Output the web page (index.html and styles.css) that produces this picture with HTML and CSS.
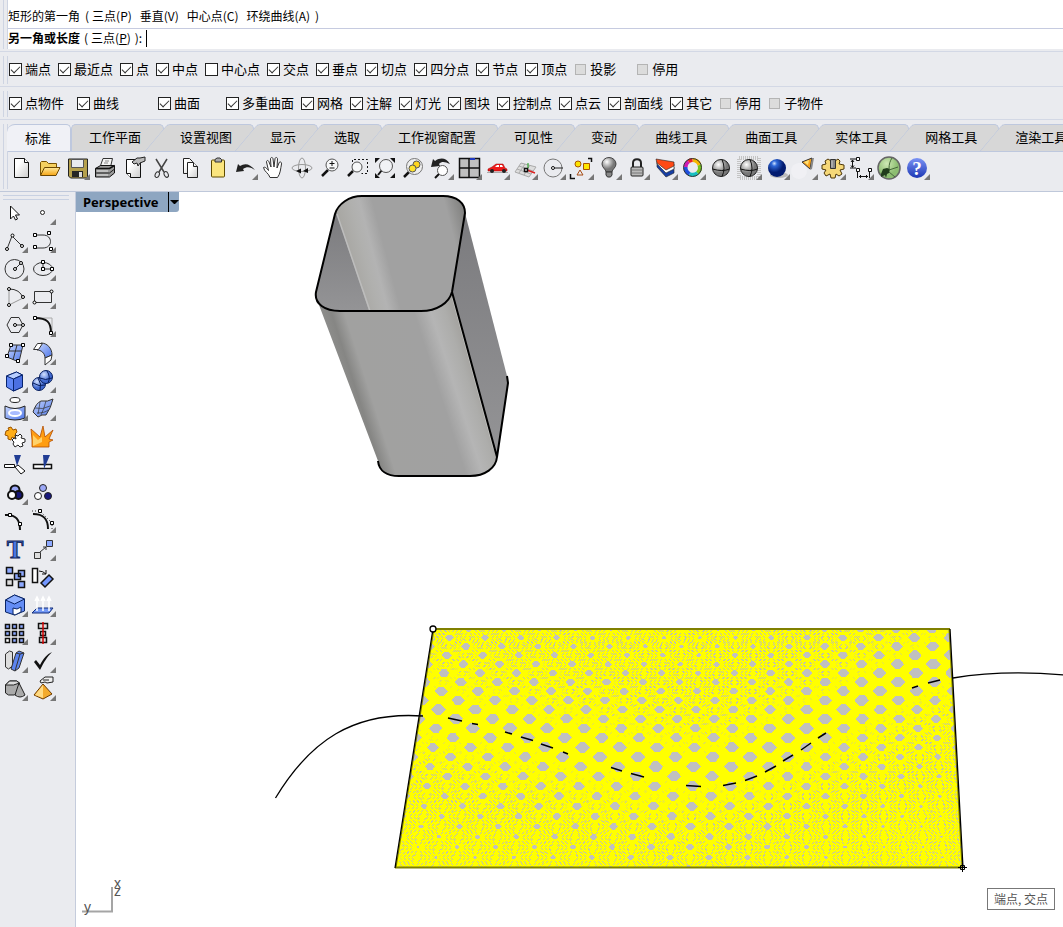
FILE: index.html
```html
<!DOCTYPE html>
<html lang="zh-CN">
<head>
<meta charset="utf-8">
<title>Perspective</title>
<link rel="stylesheet" href="styles.css">
</head>
<body>
<section class="command grip">
  <div class="history">
    <span>矩形的第一角</span><span>(</span>
    <button type="button">三点(P)</button><button type="button">垂直(V)</button><button type="button">中心点(C)</button><button type="button">环绕曲线(A)</button><span>)</span>
  </div>
  <div class="prompt">
    <label for="cmd">另一角或长度</label><span>(</span><button type="button">三点(<u>P</u>)</button><span>):</span>
    <span class="caret"></span><input id="cmd" type="text" autocomplete="off">
  </div>
</section>

<section class="filters grip">
  <label><input type="checkbox" checked>端点</label>
  <label><input type="checkbox" checked>最近点</label>
  <label><input type="checkbox" checked>点</label>
  <label><input type="checkbox" checked>中点</label>
  <label><input type="checkbox">中心点</label>
  <label><input type="checkbox" checked>交点</label>
  <label><input type="checkbox" checked>垂点</label>
  <label><input type="checkbox" checked>切点</label>
  <label><input type="checkbox" checked>四分点</label>
  <label><input type="checkbox" checked>节点</label>
  <label><input type="checkbox" checked>顶点</label>
  <label class="w62"><input type="checkbox" disabled>投影</label>
  <label><input type="checkbox" disabled>停用</label>
</section>

<section class="filters grip">
  <label class="w68"><input type="checkbox" checked>点物件</label>
  <label class="w81"><input type="checkbox" checked>曲线</label>
  <label class="w68"><input type="checkbox" checked>曲面</label>
  <label><input type="checkbox" checked>多重曲面</label>
  <label><input type="checkbox" checked>网格</label>
  <label><input type="checkbox" checked>注解</label>
  <label><input type="checkbox" checked>灯光</label>
  <label><input type="checkbox" checked>图块</label>
  <label><input type="checkbox" checked>控制点</label>
  <label><input type="checkbox" checked>点云</label>
  <label><input type="checkbox" checked>剖面线</label>
  <label><input type="checkbox" checked>其它</label>
  <label><input type="checkbox" disabled>停用</label>
  <label><input type="checkbox" disabled>子物件</label>
</section>

<section class="ribbon grip">
  <nav class="tabs">
    <button type="button" class="active">标准</button>
    <button type="button" class="straight">工作平面</button>
    <button type="button">设置视图</button>
    <button type="button">显示</button>
    <button type="button">选取</button>
    <button type="button">工作视窗配置</button>
    <button type="button">可见性</button>
    <button type="button">变动</button>
    <button type="button">曲线工具</button>
    <button type="button">曲面工具</button>
    <button type="button">实体工具</button>
    <button type="button">网格工具</button>
    <button type="button">渲染工具</button>
  </nav>
  <div class="toolbar">
    <button type="button" aria-label="新建"><svg viewBox="0 0 28 28"><path d="M7.500 4.500h10l4 4v15h-14z" fill="url(#paper)" stroke="#111"/><path d="M17.500 4.500v4h4" fill="#fff" stroke="#111"/></svg></button>
    <button type="button" aria-label="打开"><svg viewBox="0 0 28 28"><path d="M5.500 21V8.500l1-1h5l2 2h8v4" fill="#f5d060" stroke="#7a5200"/><path d="M5.500 21.500l4-8h15.500l-4 8z" fill="url(#gold)" stroke="#6b4600"/></svg></button>
    <button type="button" class="menu" aria-label="保存"><svg viewBox="0 0 28 28"><path d="M5.500 5h19v19H7.500l-2-2z" fill="#b5a04c" stroke="#222"/><path d="M8.500 5.500h12v8h-12z" fill="#e8eaee" stroke="#555"/><path d="M9 17h11v6H9z" fill="#252525"/><path d="M16 18h3v5h-3z" fill="#ddd"/></svg></button>
    <button type="button" aria-label="打印"><svg viewBox="0 0 28 28"><path d="M9 13l3-8.500h9.500l-2 8.500z" fill="#f4f4f4" stroke="#333"/><path d="M4.500 14.500l5-3h14v7.500l-5 4h-14z" fill="#999" stroke="#111"/><path d="M4.500 14.500h14l5-3" stroke="#111" fill="none" stroke-width="1.500"/><path d="M4.500 19h14l5-4" stroke="#222" fill="none"/><path d="M6 17h11M6 21h11" stroke="#e4e4e4"/><path d="M14 7h4M13 9h4" stroke="#888"/></svg></button>
    <button type="button" aria-label="属性"><svg viewBox="0 0 28 28"><path d="M7.500 5.500h14v18h-10l-4-4z" fill="url(#paper)" stroke="#111"/><path d="M7.500 19.500h4v4" fill="#fff" stroke="#111"/><path d="M13 8l5-4h3l5-1v4l-5 2-2 3-1-3-3 1z" fill="#bbb" stroke="#222"/></svg></button>
    <button type="button" aria-label="剪切"><svg viewBox="0 0 28 28" fill="none"><path d="M9 5l8 13M20 5l-8 13" stroke="#444" stroke-width="1.500"/><ellipse cx="10.500" cy="20.500" rx="2" ry="3" transform="rotate(25 10 20)" stroke="#333"/><ellipse cx="19" cy="20.500" rx="2" ry="3" transform="rotate(-25 19 20)" stroke="#333"/></svg></button>
    <button type="button" aria-label="复制"><svg viewBox="0 0 28 28" fill="url(#paper)" stroke="#222"><path d="M8.500 4.500h6l3 3v12h-9z"/><path d="M12.500 8.500h6l4 4v11h-10z"/><path d="M18.500 8.500v4h4"/></svg></button>
    <button type="button" aria-label="粘贴"><svg viewBox="0 0 28 28"><rect x="8.500" y="6" width="13" height="17" rx="1" fill="#fbe57e" stroke="#5e4a00"/><path d="M12 8V5.500l2-1.500h3l1.500 1.500V8z" fill="#aaa" stroke="#333"/></svg></button>
    <button type="button" class="menu" aria-label="复原"><svg viewBox="0 0 28 28"><path d="M5 18l2-8 2 2c5-3 10-2 15 4-4-3-8-4-12-1l1 2z" fill="#222"/></svg></button>
    <button type="button" aria-label="平移"><svg viewBox="0 0 28 28"><path d="M11 23.500c-1-4-6-6-6.500-10 2-1 3 1 5 3L7.500 8c0-2 2-2 2.500 0l2 5-.5-8c0-2 2.500-2 2.500 0l1 8 1-8c0-2 2.500-2 2.500 0l-.5 9 2-5c.5-2 3-1 2.500 1-1 5-1 9.500-4 13.500z" fill="#fff" stroke="#333"/></svg></button>
    <button type="button" aria-label="旋转"><svg viewBox="0 0 28 28" fill="none" stroke="#999"><ellipse cx="15" cy="14" rx="10" ry="3.500"/><ellipse cx="15" cy="14" rx="3.500" ry="10"/><path d="M9 17l5-2.500v5zM16 17l5-3v5z" fill="#111" stroke="none"/></svg></button>
    <button type="button" aria-label="缩放"><svg viewBox="0 0 28 28"><path d="M13 16l-6 6" stroke="#111" stroke-width="2.500"/><circle cx="17" cy="11" r="6" fill="#f6f7f8" stroke="#555"/><path d="M14.500 9.500h5M17 7v5M14.500 14h5" stroke="#111"/></svg></button>
    <button type="button" aria-label="框选缩放"><svg viewBox="0 0 28 28"><path d="M9.500 16V5.500h15v14h-6" fill="none" stroke="#111" stroke-dasharray="2 2"/><path d="M10 17l-5 5" stroke="#111" stroke-width="2.500"/><circle cx="14" cy="13" r="5" fill="#f6f7f8" stroke="#555"/></svg></button>
    <button type="button" aria-label="缩放至范围"><svg viewBox="0 0 28 28"><path d="M11 16l-4 5" stroke="#111" stroke-width="2"/><circle cx="15" cy="12" r="6.500" fill="#f1f2f5" stroke="#555"/><path d="M4 4h5l-5 5zM24 4v5l-5-5zM4 24v-5l5 5zM24 24h-5l5-5z" fill="#111"/></svg></button>
    <button type="button" aria-label="缩放选取"><svg viewBox="0 0 28 28"><path d="M10 18l-5 5" stroke="#111" stroke-width="2.500"/><circle cx="15.500" cy="12.500" r="8" fill="#eee" stroke="#777"/><circle cx="17.500" cy="10.500" r="3.500" fill="#ffd51d" stroke="#555"/><circle cx="13.500" cy="14.500" r="3.500" fill="#ffe22b" stroke="#555"/></svg></button>
    <button type="button" class="menu" aria-label="复原视图"><svg viewBox="0 0 28 28"><path d="M4 13l2-8 2 2c6-4 11-3 15 3-5-2-8-3-11 0l1 2z" fill="#222"/><path d="M12 20l-4 4" stroke="#111" stroke-width="2"/><circle cx="15.500" cy="16.500" r="5" fill="#fff" stroke="#555"/></svg></button>
    <button type="button" class="menu" aria-label="四视图"><svg viewBox="0 0 28 28"><path d="M4.500 4.500h20v19h-20z" fill="#bfbfbf" stroke="#111" stroke-width="1.500"/><path d="M14 4v20M4 14h20" stroke="#111" stroke-width="1.500"/><path d="M15 5h5" stroke="#223bc0" stroke-width="2"/></svg></button>
    <button type="button" class="menu" aria-label="设置视图"><svg viewBox="0 0 28 28"><path d="M4 18.500h21" stroke="#aaa"/><path d="M5 15l4-2 4-3h7l2 4 2 1v2H5z" fill="#ee1b1b" stroke="#900" stroke-width=".5"/><path d="M12 13l2-2h2v2zM17 11h2l1 2h-3z" fill="#fff"/><circle cx="9" cy="17" r="2" fill="#222"/><circle cx="21" cy="17" r="2" fill="#222"/></svg></button>
    <button type="button" class="menu" aria-label="工作平面"><svg viewBox="0 0 28 28"><path d="M4 18L10 9l15 4-7 10zM6 15l14 5M8 12l14 5M8 19l6-9M13 21l6-10" fill="#ddd" stroke="#aaa"/><path d="M17 14V9" stroke="#18a018"/><path d="M16 16l8 3" stroke="#d22" stroke-width="1.500"/><path d="M13.500 14.500h3v3h-3z" fill="#fff" stroke="#111" stroke-width="1.500"/></svg></button>
    <button type="button" class="menu" aria-label="圆"><svg viewBox="0 0 28 28" fill="none"><circle cx="14" cy="14" r="9" stroke="#777"/><path d="M15 14h9" stroke="#222"/><circle cx="14" cy="14" r="1.500" fill="#fff" stroke="#111"/></svg></button>
    <button type="button" class="menu" aria-label="选取"><svg viewBox="0 0 28 28"><circle cx="11" cy="10" r="3" fill="#fce300" stroke="#a50"/><path d="M16.500 9.500h6v6h-6z" fill="#ffe800" stroke="#a50"/><path d="M10 21l3-5 3 5z" fill="none" stroke="#a64b12"/><path d="M21 4.500h3.500V8M3.500 20v4.500H8" fill="none" stroke="#111" stroke-width="1.500"/></svg></button>
    <button type="button" class="menu" aria-label="隐藏"><svg viewBox="0 0 28 28"><path d="M11 18c0-3-4-4-4-8a7 6.500 0 0 1 14 0c0 4-4 5-4 8z" fill="url(#metal)" stroke="#444"/><path d="M11 18h6v3l-1.500 2h-3L11 21z" fill="#888" stroke="#333"/></svg></button>
    <button type="button" class="menu" aria-label="锁定"><svg viewBox="0 0 28 28"><path d="M10 13V9c0-5 8-5 8 0v4" fill="none" stroke="#222" stroke-width="2"/><rect x="8" y="13" width="12" height="9" rx="1" fill="#bbb" stroke="#222"/><path d="M9 16h10M9 19h10" stroke="#777"/></svg></button>
    <button type="button" class="menu" aria-label="图层"><svg viewBox="0 0 28 28" stroke="#222" stroke-width=".6"><path d="M6 13l9 10 8-4v-6l-8 4-9-8z" fill="#173fa5"/><path d="M6 10l9 9 8-4v-5l-8 4-9-7z" fill="#fff"/><path d="M5 5l18 3v4l-8 4-9-7z" fill="#ff4a16"/></svg></button>
    <button type="button" class="menu" aria-label="颜色"><svg viewBox="0 0 28 28" fill="none" stroke-width="4"><path d="M13.500 6a7.500 7.500 0 0 1 7 5" stroke="#f5b800"/><path d="M20.500 11a7.500 7.500 0 0 1-2 8" stroke="#75c61c"/><path d="M18.500 19a7.500 7.500 0 0 1-8 1" stroke="#17bfc0"/><path d="M10.500 20a7.500 7.500 0 0 1-4-7" stroke="#1f50dd"/><path d="M6.500 13a7.500 7.500 0 0 1 3-5.500" stroke="#d01bb4"/><path d="M9.500 7.500a7.500 7.500 0 0 1 4-1.500" stroke="#ee2424"/><circle cx="13.500" cy="13.500" r="9" stroke="#333" stroke-width="1"/></svg></button>
    <button type="button" aria-label="着色"><svg viewBox="0 0 28 28"><circle cx="14" cy="14" r="8.500" fill="url(#metal)" stroke="#222"/><path d="M15 5.500q4 9 0 17M5.500 15q10 3 17 0" fill="none" stroke="#111"/></svg></button>
    <button type="button" class="menu" aria-label="着色模式"><svg viewBox="0 0 28 28"><rect x="4" y="4" width="20" height="20" fill="none" stroke="#c4c4c4" stroke-width="4" stroke-dasharray="1 1"/><circle cx="14" cy="14" r="8.500" fill="url(#metal)" stroke="#222"/><path d="M15 5.500q4 9 0 17M5.500 15q10 3 17 0" fill="none" stroke="#111"/></svg></button>
    <button type="button" class="menu" aria-label="渲染"><svg viewBox="0 0 28 28"><ellipse cx="16" cy="21" rx="9" ry="3" fill="#bbb"/><circle cx="14" cy="14" r="9" fill="url(#blueball)"/></svg></button>
    <button type="button" class="menu" aria-label="灯光"><svg viewBox="0 0 28 28"><circle cx="8" cy="17" r="8" fill="#f4f4f6" opacity=".6"/><path d="M11 8l10-4-2 11z" fill="#f8a21c" stroke="#333"/><path d="M13 8l5-2-1 5z" fill="#ffe174"/><path d="M21 4h2l-2 11-2 1z" fill="#888"/></svg></button>
    <button type="button" class="menu" aria-label="选项"><svg viewBox="0 0 28 28"><path d="M9 5l3 2h4l3-2 2 2-1 3 5 1v4l-4 1 2 4-3 2-3-2-1 4h-4l-1-4-4 2-2-3 2-3-4-1v-4l4-1-1-3z" fill="#f6d878" stroke="#4c3608"/><path d="M11.500 5.500h5v9h-5z" fill="#888" stroke="#333"/><path d="M13 6.500v7" stroke="#ccc"/></svg></button>
    <button type="button" class="menu" aria-label="标注"><svg viewBox="0 0 28 28" fill="none" stroke="#111"><path d="M3 5h6M3 14h6M5.500 6v7M10.500 18v6M22.500 18v6M12 22.500h9" /><path d="M4 8l1.500-2L7 8M4 11.500l1.500 2 1.500-2M14 21l-1.500 1.500L14 24M19 21l1.500 1.500L19 24"/><path d="M9.500 3.500h3v3h-3zM9.500 14.500h3v3h-3zM21.500 14.500h3v3h-3z" fill="#fff"/></svg></button>
    <button type="button" aria-label="Grasshopper"><svg viewBox="0 0 28 28"><circle cx="14" cy="14" r="11" fill="url(#green)" stroke="#666" stroke-width="1.500"/><path d="M6 20l2-5 4-1 3 1-1 4-2 1-1 4-1-3-4 2z" fill="#213d1b"/><path d="M14 15c0-5 1-8 3-11M14 16l9-3M14 18l6 5" fill="none" stroke="#47683b"/></svg></button>
    <button type="button" class="menu" aria-label="帮助"><svg viewBox="0 0 28 28"><circle cx="14" cy="14" r="10" fill="url(#help)"/><text x="14" y="21" text-anchor="middle" class="help">?</text></svg></button>
  </div>
</section>

<div class="work">
  <aside class="tools">
    <button type="button" aria-label="选取"><svg viewBox="0 0 28 28"><path d="M9.500 7v13l3-3 2 4 2-1-2-4h4z" fill="#fff" stroke="#111"/></svg></button>
    <button type="button" class="menu" aria-label="点"><svg viewBox="0 0 28 28"><circle cx="13.500" cy="13.500" r="2" fill="#fff" stroke="#222"/></svg></button>
    <button type="button" class="menu" aria-label="多重直线"><svg viewBox="0 0 28 28" class="line"><path d="M6 22l5-13 10 10"/><g class="knot"><circle cx="6" cy="22" r="1.500"/><circle cx="11.500" cy="8.500" r="1.500"/><circle cx="21" cy="19" r="1.500"/></g></svg></button>
    <button type="button" class="menu" aria-label="控制点曲线"><svg viewBox="0 0 28 28" class="line"><path d="M6 8h8c10 0 10 13 0 13H6"/><g class="knot"><path d="M4.500 6.500h3v3h-3zM18.500 4.500h3v3h-3zM4.500 18.500h3v3h-3zM20.500 20.500h3v3h-3z"/></g></svg></button>
    <button type="button" class="menu" aria-label="圆"><svg viewBox="0 0 28 28" class="line"><circle cx="13.500" cy="14" r="9.500"/><path d="M14 14l6-6"/><g class="knot"><circle cx="14" cy="14" r="1.500"/><circle cx="20" cy="8" r="1.500"/></g></svg></button>
    <button type="button" class="menu" aria-label="椭圆"><svg viewBox="0 0 28 28" class="line"><ellipse cx="14" cy="14" rx="9.500" ry="6.500"/><path d="M14 7v7h9"/><g class="knot"><path d="M12.500 5.500h3v3h-3zM12.500 12.500h3v3h-3zM21.500 12.500h3v3h-3z"/></g></svg></button>
    <button type="button" class="menu" aria-label="圆弧"><svg viewBox="0 0 28 28" class="line"><path d="M22 15L8 22V6" stroke="#999"/><path d="M8 6q11 0 14 9"/><g class="knot"><circle cx="8" cy="6" r="1.500"/><circle cx="22" cy="14" r="1.500"/><circle cx="8" cy="22" r="1.500"/></g></svg></button>
    <button type="button" class="menu" aria-label="矩形"><svg viewBox="0 0 28 28" class="line"><path d="M5.500 8.500h17v11h-17z"/><g class="knot"><circle cx="5.500" cy="19.500" r="1.500"/><circle cx="22.500" cy="8.500" r="1.500"/></g></svg></button>
    <button type="button" class="menu" aria-label="多边形"><svg viewBox="0 0 28 28" class="line"><path d="M6 14l4-7.500h8l4 7.500-4 7.500h-8zM14 14h8"/><g class="knot"><circle cx="14" cy="14" r="1.500"/><circle cx="22" cy="14" r="1.500"/></g></svg></button>
    <button type="button" class="menu" aria-label="圆角"><svg viewBox="0 0 28 28" class="line"><path d="M6 7h17v15" stroke="#aaa"/><path d="M6 7c12 0 16 4 16 15" stroke="#111" stroke-width="2"/><g class="knot"><path d="M4.500 5.500h3v3h-3zM20.500 20.500h3v3h-3z"/></g></svg></button>
    <button type="button" class="menu" aria-label="曲面"><svg viewBox="0 0 28 28" class="line"><path d="M10 6h12l-4 17-12-5z" fill="url(#blue)"/><path d="M8 12h13M16 6l-4 15"/><g class="knot"><path d="M8.500 4.500h3v3h-3zM20.500 4.500h3v3h-3zM4.500 15.500h3v3h-3zM15.500 20.500h3v3h-3z"/></g></svg></button>
    <button type="button" class="menu" aria-label="扫掠"><svg viewBox="0 0 28 28" class="line"><path d="M12 4c6 0 11 5 11 12l-7 3c0-5-4-8-8-8z" fill="url(#blue)"/><path d="M8.500 4.500h5l-4 6h-5zM16 19l7-3-1 5-6 5z" fill="#fff"/></svg></button>
    <button type="button" class="menu" aria-label="立方体"><svg viewBox="0 0 28 28" stroke="#08246e"><path d="M5.500 9l10-4 6 3v12l-9 4-7-4z" fill="#5f86f5"/><path d="M5.500 9l7 3 9-4-6-3z" fill="#b8ceff"/><path d="M12.500 12l9-4v12l-9 4z" fill="#4b70e2"/></svg></button>
    <button type="button" class="menu" aria-label="布尔运算"><svg viewBox="0 0 28 28" fill="url(#blueball2)" stroke="#071d5b"><circle cx="10" cy="17" r="6.500"/><circle cx="17" cy="10" r="6.500"/><path d="M4 16q6 4 12 2M11 11q5 3 12 0M18 4q4 6 1 12M9 11q4 6 2 12" fill="none"/></svg></button>
    <button type="button" class="menu" aria-label="投影"><svg viewBox="0 0 28 28" stroke="#222"><ellipse cx="14" cy="5" rx="5" ry="2.500" fill="#fff"/><path d="M4 11q10 5 20 0v12q-10 4-20 0z" fill="url(#blue)"/><ellipse cx="14" cy="18" rx="6" ry="3" fill="#a9bcff" stroke="#fff" stroke-width="2"/></svg></button>
    <button type="button" class="menu" aria-label="曲面工具"><svg viewBox="0 0 28 28" class="line"><path d="M4 17q3-9 8-11 7 1 12-2-2 9-7 16-4-1-8 2z" fill="url(#blue)"/><path d="M6 13q8 2 15-2M8 18q8 0 11-3M11 7q-1 7-2 12M17 6q-2 8-5 14" stroke-width=".7"/></svg></button>
    <button type="button" aria-label="组合"><svg viewBox="0 0 28 28" stroke="#222"><path d="M5 8l3-1-1-2 3-1 2 3 3-1 1 3-2 2 2 2-3 2-2-1-1 3-3-1v-3l-3-1z" fill="#ffae19" stroke="#9b5400"/><path d="M14 12l3 1 2-2 2 2-1 2 4 1v3l-3 1 1 3-3 1-2-2-3 2-2-3 1-2-2-2 2-2 2 1z" fill="#fff"/></svg></button>
    <button type="button" aria-label="炸开"><svg viewBox="0 0 28 28"><path d="M3 24V17L2 6l9 8 3-11 2 11 8-7-4 9 4 1-4 2v5z" fill="#ff9d12" stroke="#b34d00" stroke-width=".8"/><path d="M4 23V12l5 5 4-3v5z" fill="#ffd26a"/></svg></button>
    <button type="button" aria-label="修剪"><svg viewBox="0 0 28 28"><path d="M3.500 13.500h10v3h-10zM14 16l3-2 7 6-4 3z" fill="#fff" stroke="#111"/><path d="M13 4h7l-4 11z" fill="#213d94"/></svg></button>
    <button type="button" aria-label="分割"><svg viewBox="0 0 28 28"><path d="M4.500 13.500h18v4h-18z" fill="#fff" stroke="#111" stroke-width="1.500"/><path d="M14 4h7l-6 14z" fill="#213d94"/></svg></button>
    <button type="button" class="menu" aria-label="群组"><svg viewBox="0 0 28 28" stroke="#111" stroke-width="2"><circle cx="14" cy="11" r="4.500" fill="#9ba7f6"/><circle cx="17.500" cy="16" r="4" fill="#161675"/><circle cx="11" cy="16" r="4" fill="#fff"/></svg></button>
    <button type="button" aria-label="解散群组"><svg viewBox="0 0 28 28" stroke="#222"><circle cx="14" cy="9" r="3.500" fill="#9ba7f6"/><circle cx="9" cy="17" r="3.500" fill="#fff"/><circle cx="19" cy="17" r="3.500" fill="#18187c"/></svg></button>
    <button type="button" aria-label="点编辑"><svg viewBox="0 0 28 28" class="line"><path d="M4 8c11-1 15 5 15 15" stroke="#111" stroke-width="2"/><g class="knot"><path d="M7.500 6.500h3v3h-3zM17.500 15.500h3v3h-3z"/></g></svg></button>
    <button type="button" class="menu" aria-label="控制点"><svg viewBox="0 0 28 28" class="line"><path d="M4 7c11 0 15 5 15 15" stroke="#111" stroke-width="2"/><path d="M3 4h8l12 12v8" stroke-dasharray="1 2"/><g class="knot"><path d="M9.500 2.500h3v3h-3zM21.500 14.500h3v3h-3z"/></g></svg></button>
    <button type="button" aria-label="文字"><svg viewBox="0 0 28 28"><text x="14" y="23" text-anchor="middle" class="tee">T</text></svg></button>
    <button type="button" class="menu" aria-label="移动"><svg viewBox="0 0 28 28" class="line"><path d="M5.500 17.500h6v6h-6z" fill="#ddd"/><path d="M17.500 5.500h6v6h-6z" fill="#8da9ff"/><path d="M11 17l6-5M14 12h3v3"/></svg></button>
    <button type="button" aria-label="复制"><svg viewBox="0 0 28 28" class="line dark"><path d="M5.500 4.500h6v6h-6zM17.500 7.500h6v6h-6zM13.500 10.500h6v6h-6zM17.500 18.500h6v6h-6z" fill="#8da9ff"/><path d="M5.500 16.500h6v6h-6z" fill="#ddd"/></svg></button>
    <button type="button" aria-label="旋转"><svg viewBox="0 0 28 28" class="line dark"><path d="M3.500 5.500h5v14h-5z" fill="#fff"/><path d="M10 8q4 0 7 3M13 11h4V7" stroke-width="1"/><path d="M12 20l8-8 4 4-8 8z" fill="#7397ff"/></svg></button>
    <button type="button" class="menu" aria-label="实体"><svg viewBox="0 0 28 28" stroke="#082365"><path d="M4.500 9l9-5 10 4v12l-10 4-9-3z" fill="#638cf5"/><path d="M4.500 9l9 4 10-5-10-4z" fill="#8fb0ff"/><path d="M12 23v-6l4 1 4-2v5l-6 3z" fill="#fff"/></svg></button>
    <button type="button" class="menu" aria-label="挤出"><svg viewBox="0 0 28 28"><path d="M3 22l5-5h16l-4 5z" fill="#7298f5" stroke="#122d7a"/><path d="M8 20V7M14 20V7M20 20V7M6 10l2-4 2 4M12 10l2-4 2 4M18 10l2-4 2 4" stroke="#fff" stroke-width="1.500" fill="none"/></svg></button>
    <button type="button" class="menu" aria-label="阵列"><svg viewBox="0 0 28 28" class="line dark"><path d="M4.500 5.500h4v4h-4zM11.500 5.500h4v4h-4zM18.500 5.500h4v4h-4zM4.500 12.500h4v4h-4zM11.500 12.500h4v4h-4zM18.500 12.500h4v4h-4zM11.500 19.500h4v4h-4zM18.500 19.500h4v4h-4z" fill="#8da9ff"/><path d="M4.500 19.500h4v4h-4z" fill="#fff"/></svg></button>
    <button type="button" class="menu" aria-label="对齐"><svg viewBox="0 0 28 28" class="line dark"><path d="M9.500 4.500h9v5h-9zM11.500 12.500h5v4h-5zM10.500 18.500h7v5h-7z" fill="#ddd"/><path d="M14 3v22" stroke="#d40000"/></svg></button>
    <button type="button" class="menu" aria-label="弯曲"><svg viewBox="0 0 28 28" class="line"><path d="M4.500 7l4-3 3 1v14l-4 3-3-2z" fill="#ddd"/><path d="M15 6l3-2 5 2-5 15-4 3-4-2z" fill="#5c84ef"/><path d="M15 6l4 1 4-1M19 7l-5 17"/></svg></button>
    <button type="button" class="menu" aria-label="检查"><svg viewBox="0 0 28 28"><path d="M5 15l2-2 4 5C14 12 18 7 23 5 18 10 15 15 11 23z" fill="#111"/></svg></button>
    <button type="button" class="menu" aria-label="基本体"><svg viewBox="0 0 28 28" stroke="#222"><path d="M4.500 10l4-4h7l3 2v7l-5 5h-6l-3-2z" fill="#aaa"/><path d="M4.500 10h8l6-2-3-2h-7z" fill="#ddd"/><path d="M18 8l6 12q-5 4-10 0z" fill="#aaa"/></svg></button>
    <button type="button" class="menu" aria-label="设置"><svg viewBox="0 0 28 28"><path d="M5 20l9-11 9 10-9 5z" fill="#f3aa2c" stroke="#6d3b00"/><path d="M14 10v13l-8-3z" fill="#ffda83"/><path d="M11 6l5-4h8v5l-6 1-2-1-4 1z" fill="#eee" stroke="#222"/><path d="M14 5h6" stroke="#222"/></svg></button>
  </aside>

  <main class="viewport">
    <svg class="scene" viewBox="76 192 987 735" preserveAspectRatio="xMinYMin slice" role="img" aria-label="Perspective">
      <defs>
        <linearGradient id="paper" x2="1" y2="1"><stop offset=".3" stop-color="#fff"/><stop offset="1" stop-color="#ccc"/></linearGradient>
        <linearGradient id="gold" x2="0" y2="1"><stop stop-color="#ffe999"/><stop offset="1" stop-color="#f5a414"/></linearGradient>
        <linearGradient id="blue" x2="1" y2="1"><stop stop-color="#c9d8ff"/><stop offset="1" stop-color="#4c75e8"/></linearGradient>
        <radialGradient id="metal" cx=".35" cy=".3"><stop stop-color="#fff"/><stop offset="1" stop-color="#777"/></radialGradient>
        <radialGradient id="blueball" cx=".35" cy=".25"><stop stop-color="#cfe2ff"/><stop offset=".3" stop-color="#2e68d8"/><stop offset="1" stop-color="#021b70"/></radialGradient>
        <radialGradient id="blueball2" cx=".35" cy=".3"><stop stop-color="#d4e2ff"/><stop offset="1" stop-color="#3f68d0"/></radialGradient>
        <radialGradient id="green" cx=".4" cy=".3"><stop stop-color="#cfe9b5"/><stop offset="1" stop-color="#8cbd70"/></radialGradient>
        <linearGradient id="help" x2="0" y2="1"><stop stop-color="#7b93f5"/><stop offset="1" stop-color="#1c37b4"/></linearGradient>
        <linearGradient id="front" gradientUnits="userSpaceOnUse" x1="347" y1="390" x2="466" y2="352"><stop stop-color="#8d8d8b"/><stop offset=".07" stop-color="#868684"/><stop offset=".17" stop-color="#a1a1a0"/><stop offset=".7" stop-color="#a1a1a1"/><stop offset=".83" stop-color="#b5b5b5"/><stop offset=".94" stop-color="#adadab"/><stop offset="1" stop-color="#a6a5a2"/></linearGradient>
        <linearGradient id="inside" gradientUnits="userSpaceOnUse" x1="350" y1="260" x2="472" y2="228"><stop stop-color="#a8a7a3"/><stop offset=".12" stop-color="#b0b0ae"/><stop offset=".19" stop-color="#b3b3b3"/><stop offset=".29" stop-color="#a1a1a1"/><stop offset=".84" stop-color="#a1a1a1"/><stop offset="1" stop-color="#7b7b79"/></linearGradient>
        <linearGradient id="side" x2="0" y2="1"><stop stop-color="#7b7b7e"/><stop offset="1" stop-color="#949496"/></linearGradient>
        <clipPath id="plane"><path d="M433 629H950L963 868H395Z"/></clipPath>
      </defs>
      <path d="M465 213L507 376 508 384 497 458 452 292Z" fill="url(#side)"/>
      <path d="M319 305L378 461C378 471 387 476 399 476H470C485 476 496 468 497 457L452 292 420 308Z" fill="url(#front)"/>
      <path d="M362 196H443C457 196 465 203 465 213L452 292C449 303 437 311 421 311H340C325 311 314 304 316 292L335 214C338 204 349 196 362 196Z" fill="url(#inside)"/>
      <path d="M336 212L369 311H340C325 311 314 304 316 292Z" fill="url(#side)"/>
      <path d="M337 214L370 311" stroke="#bdbdbd" stroke-width="1.500"/>
      <path d="M453 298L494 449" stroke="#c2c2bf" stroke-width="2"/>
      <g fill="none" stroke="#000" stroke-width="2" stroke-linejoin="round">
        <path d="M362 196H443C457 196 465 203 465 213L452 292C449 303 437 311 421 311H340C325 311 314 304 316 292L335 214C338 204 349 196 362 196Z"/>
        <path d="M452 292L497 457L508 383 507 376M378 461C379 471 387 476 399 476H470C485 476 496 468 497 457"/>
      </g>
      <g clip-path="url(#plane)" shape-rendering="crispEdges">
        <path d="M395 629H963V868H395Z" fill="#ff0"/>
        <path id="faint" fill="#e3e34c"/>
        <path id="grain" fill="#c2c2a8"/>
        <path id="dots" fill="#c0c0c0"/>
      </g>
      <path d="M433 629H950M395 867.500H963" stroke="#808000" stroke-width="2"/>
      <path d="M434 629L396 868M949 629L962 868" stroke="#808000"/>
      <path d="M433 629L395 868M950 629L963 868" stroke="#000" stroke-width="1.300"/>
      <g fill="none" stroke="#000" stroke-width="1.300">
        <path d="M275.500 798C310 741 353 711 423 716M953 678C990 672 1030 672 1064 675"/>
        <path stroke-width="1.500" d="M448 718L462 721M472 723.500L478 724.500M505 732L512 734M521 737L533 740.500M541 744L553 748M563 752L568 754M611 767.500L622 771M631 773.500L644 777M686 785.500L701 786.500M723 785.500L736 783M745 780.500L757 776M765 772L776 766M783 761L793 755M801 750L811 743M818 738L826 733M912 688L918 686M928 683L940 680"/>
        <circle cx="433" cy="629" r="3" fill="#fff"/>
      </g>
      <path d="M958 867.500h9M962.500 863v9M960.500 865.500h4v4h-4z" fill="none" stroke="#000"/>
      <path d="M82 911.500H112V887" fill="none" stroke="#a5a5a5" stroke-width="2"/>
      <g class="axis"><text x="84" y="912">y</text><text x="114" y="888">x</text><text x="114" y="896">z</text></g>
    </svg>
    <div class="title"><button type="button">Perspective</button><button type="button" class="drop" aria-label="视图菜单"></button></div>
    <div class="tip">端点, 交点</div>
  </main>
</div>
<script src="pattern.js"></script>
</body>
</html>
```
FILE: styles.css
```css
* { box-sizing: border-box; }
body {
  margin: 0;
  min-height: 100vh;
  display: flex;
  flex-direction: column;
  overflow-x: hidden;
  background: #eaebef;
  color: #000;
  font: 13px/18px "Noto Sans CJK SC", "Noto Sans", sans-serif;
}
button {
  margin: 0;
  padding: 0;
  border: 0;
  background: none;
  color: inherit;
  font: inherit;
  white-space: nowrap;
}
.grip { position: relative; padding-left: 7px; border-bottom: 1px solid #d3d8e5; }
.grip::before {
  content: "";
  position: absolute;
  left: 3px;
  top: 4px;
  bottom: 2px;
  width: 3px;
  border: solid #ced4e2;
  border-width: 0 1px;
}

.command { height: 52px; font-size: 12px; }
.command::before { top: 0; }
.history, .prompt { display: flex; align-items: center; background: #fff; padding-left: 1px; }
.history { height: 29px; padding-top: 4px; border-bottom: 1px solid #c6cbe0; gap: 8px; }
.history span:first-child { margin-right: -3px; }
.history span:nth-child(2) { margin-right: -5px; }
.history span:last-child { margin-left: -3px; }
.prompt { height: 20px; padding-bottom: 2px; gap: 4px; }
.prompt label { font-weight: 700; }
.prompt span:nth-of-type(1) { margin-right: -1px; }
.prompt .caret { width: 1px; height: 17px; background: #000; }
.prompt input { flex: 1; min-width: 0; border: 0; outline: 0; padding: 0; font: inherit; background: none; }

.filters { display: flex; align-items: center; height: 35px; padding-left: 9px; }
.filters + .filters { height: 33px; }
.filters label { display: flex; align-items: center; gap: 3px; padding-right: 7px; white-space: nowrap; }
.filters .w62 { width: 62px; }
.filters .w68 { width: 68px; }
.filters .w81 { width: 81px; }
.filters input {
  appearance: none;
  width: 13px;
  height: 13px;
  margin: 0;
  border: 1px solid #222;
  background: #fff;
}
.filters input:checked::after {
  content: "";
  display: block;
  width: 8px;
  height: 4px;
  margin: 2px 0 0 1px;
  border: solid #333;
  border-width: 0 0 1px 1px;
  transform: rotate(-45deg);
}
.filters input:disabled { width: 11px; height: 11px; margin: 0 1px; border-color: #b4b4b4; background: #dcdcdc; }

.ribbon { border-color: #bfc8da; }
.tabs { display: flex; height: 32px; padding-top: 4px; border-bottom: 1px solid #bec8de; overflow: hidden; }
.tabs button { position: relative; isolation: isolate; flex: none; padding: 0 2px 1px 36px; }
.tabs button::before, .tabs button::after {
  content: "";
  position: absolute;
  z-index: -1;
  top: 0;
  bottom: 0;
  border: 1px solid #bec8de;
  background: #d7d7d7;
}
.tabs button::before { left: 12px; width: 26px; border-width: 1px 0 0 1px; border-radius: 3px 0 0 0; transform: skewX(-40deg); }
.tabs button::after { left: 26px; right: -20px; border-width: 1px 1px 0 0; border-radius: 0 5px 0 0; }
.tabs .straight { padding: 0 3px 1px 18px; }
.tabs .straight::before { left: 0; transform: none; border-radius: 5px 0 0 0; }
.tabs .active { padding: 0 19px 1px 18px; height: 28px; z-index: 1; background: #f0f1f6; border: 1px solid #bec8de; border-width: 1px 1px 0 0; border-radius: 8px 5px 0 0; }
.tabs .active::before, .tabs .active::after { display: none; }
.toolbar { display: flex; height: 39px; padding-top: 2px; overflow: hidden; }
.toolbar button, .tools button { position: relative; width: 28px; height: 28px; flex: none; }
.toolbar svg, .tools svg { display: block; width: 28px; height: 28px; }
.menu::after {
  content: "";
  position: absolute;
  right: 1px;
  bottom: 2px;
  width: 6px;
  height: 6px;
  background: #777;
  clip-path: polygon(100% 0, 100% 100%, 0 100%);
}
.line { fill: none; stroke: #333; }
.dark { stroke: #111; stroke-width: 1.5px; }
.knot { fill: #fff; stroke: #000; }
.help { font: bold 19px "Liberation Serif", serif; fill: #fff; }
.tee { font: bold 25px "Liberation Serif", serif; fill: #4b77e3; stroke: #13275d; }

.work { flex: 1; display: grid; grid-template-columns: 76px minmax(0, 1fr); }
.tools {
  position: relative;
  display: grid;
  grid-template-columns: 28px 28px;
  grid-auto-rows: 28px;
  align-content: start;
  padding: 7px 0 0 1px;
  border-right: 1px solid #c5ccdc;
}
.tools::before {
  content: "";
  position: absolute;
  left: 3px;
  right: 6px;
  top: 3px;
  height: 3px;
  border: solid #c8d1e2;
  border-width: 1px 0;
}
.viewport { position: relative; overflow: hidden; background: #fff; }
.scene { position: absolute; inset: 0; width: 100%; height: 100%; }
.title { position: absolute; left: 0; top: 0; display: flex; height: 20px; padding-left: 7px; background: #8ea6c1; border-radius: 0 0 3px 0; font: bold 13px/20px "Noto Sans", sans-serif; }
.drop { width: 11px; margin-left: 9px; border-left: 1px solid #000; }
.drop::after { content: ""; display: block; margin-left: 1px; border: 4px solid transparent; border-top-color: #000; border-bottom: 0; }
.tip { position: absolute; right: 8px; bottom: 17px; padding: 1px 6px; border: 1px solid #777; background: #fff; color: #555; font-size: 12px; }
.axis { font: 14px "Liberation Sans", sans-serif; fill: #555; }
```
FILE: pattern.js
```js
// Height of the widest band of dots at a given x.
const ridge = [[395, 702], [438, 712], [560, 744], [693, 772], [760, 752], [843, 712], [933, 664], [970, 654]];
function ridgeY(x) {
  for (let i = 1; i < ridge.length; i++) {
    const [x0, y0] = ridge[i - 1], [x1, y1] = ridge[i];
    if (x <= x1) return y0 + (y1 - y0) * (x - x0) / (x1 - x0);
  }
  return 654;
}
let dots = "", grain = "", faint = "";
for (let r = -1; r < 25; r++) {
  const y = 637.7 + 8.68 * r + 0.0379 * r * r;
  const t = (y - 637.7) / 209.3;
  const left = 449.3 - 31.3 * t, step = 35.77 + 3.05 * t;
  for (let k = -1; k < 15; k++) {
    const x = left + step * (k + (r & 1 ? 0.5 : 0));
    const d = Math.abs(y - ridgeY(x));
    const w = Math.max(3, 15 - 0.08 * d) / 2, h = w * 0.7;
    dots += `M${x - w} ${y}L${x - w / 3} ${y - h}H${x + w / 3}L${x + w} ${y}L${x + w / 3} ${y + h}H${x - w / 3}Z`;
    const reach = Math.min(1, (d - 20) / 70);
    if (reach <= 0) continue;
    const cx = Math.round(x), cy = Math.round(y);
    // Short dashes that radiate from the dot, mirrored into its four quadrants.
    for (let b = 1; b <= 8; b += 3) {
      for (let a = 2 + (b % 2); a <= 16; a += 4) {
        const edge = a / 18 + b / 9.5;
        if (edge > 1 || a / (w + 2) + b / (h + 2) < 1.1 || edge < 1 - 0.85 * reach) continue;
        const strong = edge > 1.3 - reach;
        for (const [s, v] of [[1, 1], [1, -1], [-1, 1], [-1, -1]]) {
          const p = `M${cx + s * a} ${cy + v * b}h1v1h-1zM${cx + s * (a + 1)} ${cy + v * (b + 1)}h1v1h-1z`;
          if (strong) grain += p; else faint += p;
        }
      }
    }
  }
}
document.getElementById("dots").setAttribute("d", dots);
document.getElementById("grain").setAttribute("d", grain);
document.getElementById("faint").setAttribute("d", faint);
```
